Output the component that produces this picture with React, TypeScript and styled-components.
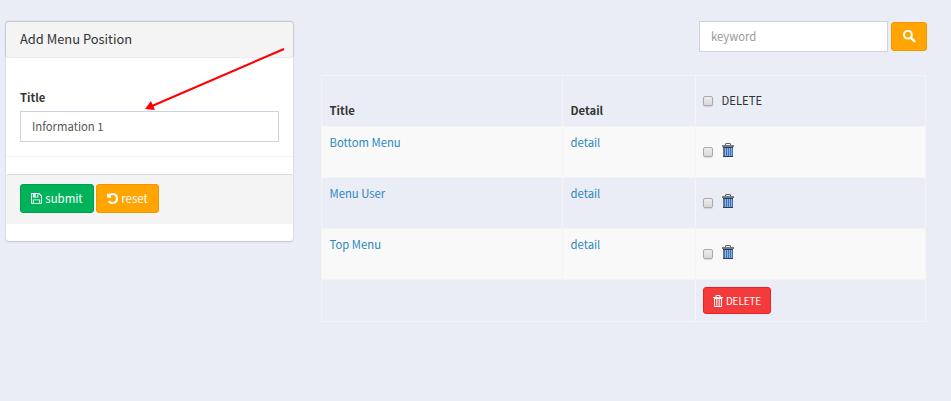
import React from "react";
import styled, { createGlobalStyle } from "styled-components";

const Global = createGlobalStyle`
  * { box-sizing: border-box; }
  body {
    margin: 0;
    background: #eaedf5;
    color: #333;
    font-family: "Source Sans Pro", "Noto Sans CJK SC", sans-serif;
    font-size: 11.3px;
    line-height: 18px;
  }
`;

const Page = styled.main`
  position: relative;
  display: flex;
  align-items: flex-start;
  width: 951px;
  height: 401px;
  padding: 21px 0 0 6px;
  overflow: hidden;
`;

const Card = styled.form`
  width: 287px;
  height: 220px;
  background: #fff;
  border-radius: 3px;
  border-top: 1px solid #dcdcdc;
  box-shadow: 0 1px 2px rgba(0, 0, 0, 0.16), 0 0 1px rgba(0, 0, 0, 0.16);
`;

const CardHeader = styled.header`
  height: 35px;
  padding: 8px 14px;
  background: #f4f4f4;
  border-radius: 3px;
  box-shadow: 0 0 2px rgba(0, 0, 0, 0.3);
  font-size: 12.9px;
  line-height: 18px;
`;

const CardBody = styled.div`
  height: 100px;
  padding: 31px 14px 0;
  border-bottom: 1px solid #f4f4f4;
`;

const Label = styled.label`
  display: block;
  height: 23px;
  font-weight: 700;
`;

const Input = styled.input<{ $width: number }>`
  display: block;
  width: ${(p) => p.$width}px;
  height: 31px;
  padding: 0 11px 2px;
  border: 1px solid #cfd1de;
  border-radius: 0;
  background: #fff;
  color: #555;
  font: inherit;
  outline: none;
  &::placeholder { color: #999; opacity: 1; }
`;

const CardFooter = styled.footer`
  display: flex;
  gap: 2px;
  height: 50px;
  margin-top: 17px;
  padding: 9px 14px;
  background: #f4f4f4;
  border-top: 1px solid #dcdcdc;
  border-radius: 3px 3px 0 0;
`;

const tones = {
  green: ["#00b35a", "#009f4d"],
  orange: ["#ffa400", "#f39700"],
  red: ["#f43b3b", "#ee1f25"],
};

const Button = styled.button<{ $tone: keyof typeof tones; $width: number; $small?: boolean }>`
  display: flex;
  align-items: center;
  justify-content: center;
  gap: 3px;
  width: ${(p) => p.$width}px;
  height: ${(p) => (p.$small ? 27 : 29)}px;
  padding: 0;
  border: 1px solid ${(p) => tones[p.$tone][1]};
  border-radius: 3px;
  background: ${(p) => tones[p.$tone][0]};
  color: #fff;
  font: inherit;
  font-size: ${(p) => (p.$small ? 9.8 : 11.4)}px;
  svg { display: block; flex: none; }
`;

const ButtonText = styled.span`
  padding-bottom: 2px;
`;

const Content = styled.section`
  width: 605px;
  margin-left: 28px;
`;

const Search = styled.div`
  display: flex;
  align-items: center;
  justify-content: flex-end;
  gap: 3px;
  height: 31px;
  margin: 0 -1px 23px 0;
`;

const Table = styled.div`
  display: grid;
  width: 605px;
  grid-template-columns: 240px 132px 229px;
  grid-template-rows: 50px 50px 50px 50px 41px;
  gap: 1px;
  border: 1px solid #f4f4f4;
  background: #f4f4f4;
`;

const Cell = styled.div<{ $striped?: boolean; $heading?: boolean; $span?: number }>`
  display: flex;
  grid-column: span ${(p) => p.$span ?? 1};
  align-items: ${(p) => (p.$heading ? "flex-end" : "flex-start")};
  padding: 6px 7px 7px 7.5px;
  background: ${(p) => (p.$striped ? "#f9f9f9" : "#eaedf5")};
  font-weight: ${(p) => (p.$heading ? 700 : 400)};
`;

const ActionCell = styled(Cell)<{ $top: number }>`
  padding: ${(p) => p.$top}px 7px 0;
`;

const Link = styled.a`
  color: #2d88bd;
  text-decoration: none;
`;

const Check = styled.input.attrs({ type: "checkbox" })`
  appearance: none;
  width: 10px;
  height: 10px;
  margin: 4px 9px 0 0;
  border: 1px solid #aaa;
  border-radius: 2px;
  background: linear-gradient(#eee, #d8d8d8);
  box-shadow: 0 1px 1px rgba(0, 0, 0, 0.12);
`;

const CheckLabel = styled.span`
  margin: -1px 0 0 -0.5px;
`;

const IconButton = styled.button`
  display: block;
  padding: 0;
  border: 0;
  background: none;
  svg { display: block; }
`;

const Arrow = styled.svg`
  position: absolute;
  left: 143px;
  top: 46px;
  pointer-events: none;
`;

const SaveIcon = () => (
  <svg width="11" height="11" viewBox="0 128 1536 1536" fill="currentColor" aria-hidden="true">
    <path d="M384 1536h768v-384h-768v384zM1280 1536h128v-896q0-14-10-38.5t-20-34.5l-281-281q-10-10-34-20t-39-10v416q0 40-28 68t-68 28h-576q-40 0-68-28t-28-68v-416h-128v1280h128v-416q0-40 28-68t68-28h832q40 0 68 28t28 68v416zM896 608v-320q0-13-9.5-22.5t-22.5-9.5h-192q-13 0-22.5 9.5t-9.5 22.5v320q0 13 9.5 22.5t22.5 9.5h192q13 0 22.5-9.5t9.5-22.5zM1536 640v896q0 40-28 68t-68 28h-1344q-40 0-68-28t-28-68v-1344q0-40 28-68t68-28h928q40 0 88 20t76 48l280 280q28 28 48 76t20 88z" />
  </svg>
);

const UndoIcon = () => (
  <svg width="11" height="11" viewBox="128 128 1536 1536" fill="currentColor" stroke="currentColor" strokeWidth="60" aria-hidden="true">
    <path d="M1664 896q0 156-61 298t-164 245-245 164-298 61q-172 0-327-72.5t-264-204.5q-7-10-6.5-22.5t8.5-20.5l137-138q10-9 25-9 16 2 23 12 73 95 179 147t225 52q104 0 198.5-40.5t163.5-109.5 109.5-163.5 40.5-198.5-40.5-198.5-109.5-163.5-163.5-109.5-198.5-40.5q-98 0-188 35.5t-160 101.5l137 138q31 30 14 69-17 40-59 40h-448q-26 0-45-19t-19-45v-448q0-42 40-59 39-17 69 14l130 129q107-101 244.5-156.5t284.5-55.5q156 0 298 61t245 164 164 245 61 298z" />
  </svg>
);

const SearchIcon = () => (
  <svg width="13" height="13" viewBox="0 0 13 13" fill="none" stroke="currentColor" aria-hidden="true">
    <circle cx="4.9" cy="4.7" r="3.9" strokeWidth="2" />
    <path d="M8 7.9 11.3 11.2" strokeWidth="2.5" strokeLinecap="round" />
  </svg>
);

const TrashIcon = () => (
  <svg width="12" height="14" viewBox="0 0 12 14" aria-hidden="true">
    <path d="M3.5 2V1q0-.5.6-.5h3.8q.6 0 .6.5v1" fill="none" stroke="#555c66" />
    <path d="M0 2h12v2H0z" fill="#777d84" />
    <path d="M1 4.5h10V14H1z" fill="#3d70b8" />
    <path d="M1 4h10v1H1zM1 13h10v1H1z" fill="#263d5b" />
    <path d="M3.5 5v8M7.5 5v8" stroke="#b9c4cf" strokeWidth=".8" />
    <path d="M5.5 5v8M9.5 5v8" stroke="#8fc5f4" strokeWidth=".8" />
    <path d="M1.5 5v8" stroke="#8a7364" strokeWidth=".8" />
  </svg>
);

const TrashOutline = () => (
  <svg width="10" height="12" viewBox="0 0 10 12" fill="none" stroke="currentColor" aria-hidden="true">
    <path d="M3 2V.5h4V2M1 3.5h8M1.5 4v7.5h7V4" />
    <path d="M0 2.5h10" />
    <path d="M3.4 4v7M5 4v7M6.6 4v7" strokeWidth=".8" strokeOpacity=".9" />
  </svg>
);

const rows = ["Bottom Menu", "Menu User", "Top Menu"];

export default function App() {
  return (
    <>
      <Global />
      <Page>
        <Card onSubmit={(e) => e.preventDefault()}>
          <CardHeader>Add Menu Position</CardHeader>
          <CardBody>
            <Label htmlFor="title">Title</Label>
            <Input id="title" $width={259} defaultValue="Information 1" />
          </CardBody>
          <CardFooter>
            <Button type="submit" $tone="green" $width={74}><SaveIcon /><ButtonText>submit</ButtonText></Button>
            <Button type="reset" $tone="orange" $width={63}><UndoIcon /><ButtonText>reset</ButtonText></Button>
          </CardFooter>
        </Card>
        <Content>
          <Search>
            <Input $width={189} placeholder="keyword" />
            <Button type="button" $tone="orange" $width={36} aria-label="Search"><SearchIcon /></Button>
          </Search>
          <Table>
            <Cell $heading>Title</Cell>
            <Cell $heading>Detail</Cell>
            <ActionCell $top={16}><Check /><CheckLabel>DELETE</CheckLabel></ActionCell>
            {rows.map((name, i) => (
              <React.Fragment key={name}>
                <Cell $striped={i % 2 === 0}><Link href="#">{name}</Link></Cell>
                <Cell $striped={i % 2 === 0}><Link href="#">detail</Link></Cell>
                <ActionCell $striped={i % 2 === 0} $top={16}>
                  <Check />
                  <IconButton type="button" aria-label={`Delete ${name}`}><TrashIcon /></IconButton>
                </ActionCell>
              </React.Fragment>
            ))}
            <Cell $span={2} />
            <ActionCell $top={7}>
              <Button type="button" $tone="red" $width={68} $small><TrashOutline />DELETE</Button>
            </ActionCell>
          </Table>
        </Content>
        <Arrow width="144" height="68" aria-hidden="true">
          <path d="M141 3 9 60" stroke="#f00" strokeWidth="2" />
          <path d="M2 63 8 55l4 9z" fill="#f00" />
        </Arrow>
      </Page>
    </>
  );
}
